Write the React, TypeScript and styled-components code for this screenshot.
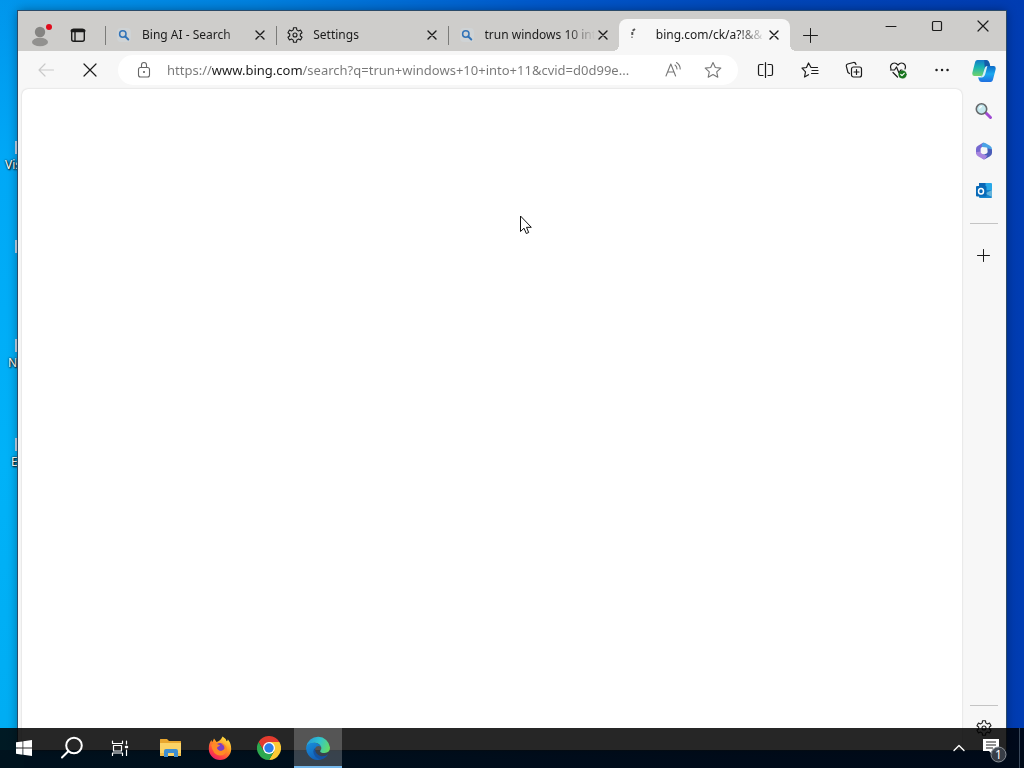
import React from "react";
import styled, { createGlobalStyle } from "styled-components";

const Global = createGlobalStyle`
  * { box-sizing: border-box; }
  body {
    margin: 0;
    overflow: hidden;
    font-family: "Noto Sans", "Open Sans", sans-serif;
    font-size: 12px;
    color: #1b1b1b;
  }
  button { font: inherit; color: inherit; }
`;

const Desktop = styled.div`
  position: relative;
  height: 100vh;
  overflow: hidden;
  background: linear-gradient(to right, #0096ec 0%, #0080de 25%, #0058cb 53%, #0046b8 75%, #003cb2 100%);

  &::before {
    content: "";
    position: absolute;
    inset: 0 auto 0 0;
    width: 24px;
    background: linear-gradient(rgba(0, 176, 248, 0) 0, #00a8f6 160px, #00b2f8 60%, #00acf2 100%);
  }
`;

const Shortcut = styled.div<{ $top: number; $left: number }>`
  position: absolute;
  top: ${(p) => p.$top}px;
  left: ${(p) => p.$left}px;
  color: #fff;
  line-height: 16px;
  white-space: nowrap;
  text-shadow: 1px 1px 2px #000, 0 0 2px #000;
`;

const ShortcutMark = styled.span<{ $top: number }>`
  position: absolute;
  left: 15px;
  top: ${(p) => p.$top}px;
  width: 12px;
  height: 13px;
  background: #c4d8ec;
`;

const BrowserWindow = styled.main`
  position: absolute;
  inset: 11px 18px 18px 18px;
  display: flex;
  flex-direction: column;
  background: #f7f7f7;
  box-shadow: 0 0 0 1px #2b4a68, 0 0 10px rgba(0, 0, 0, 0.4);
`;

const TabStrip = styled.header`
  display: flex;
  height: 40px;
  flex: none;
  background: #cecdcb;
`;

const IconButton = styled.button<{ $w?: number; $h?: number }>`
  display: flex;
  flex: none;
  align-items: center;
  justify-content: center;
  width: ${(p) => p.$w ?? 32}px;
  height: ${(p) => p.$h ?? 32}px;
  padding: 0;
  border: 0;
  background: transparent;
`;

const ProfileArea = styled.div`
  display: flex;
  flex: none;
  width: 87px;
  padding: 8px 0 0 4px;
  gap: 2px;
`;

const Tabs = styled.div`
  display: flex;
  flex: 0 1 685px;
  min-width: 0;
  padding-top: 8px;
`;

const Tab = styled.div<{ $active?: boolean }>`
  position: relative;
  display: flex;
  flex: 1 1 0;
  min-width: 0;
  align-items: center;
  padding: 0 8px 0 11px;
  background: ${(p) => (p.$active ? "#f7f7f7" : "transparent")};
  border-radius: ${(p) => (p.$active ? "8px 8px 0 0" : "0")};

  &::before {
    content: "";
    position: absolute;
    left: 0;
    top: 7px;
    width: 1px;
    height: 19px;
    background: ${(p) => (p.$active ? "transparent" : "#7b7b79")};
  }

  &::after {
    content: "";
    display: ${(p) => (p.$active ? "block" : "none")};
    position: absolute;
    inset: auto -6px 0 -6px;
    height: 6px;
    background:
      radial-gradient(circle at 0 0, transparent 6px, #f7f7f7 6px) left / 6px 6px no-repeat,
      radial-gradient(circle at 100% 0, transparent 6px, #f7f7f7 6px) right / 6px 6px no-repeat;
  }
`;

const TabLabel = styled.button`
  display: flex;
  flex: 1;
  min-width: 0;
  gap: 10px;
  align-items: center;
  height: 32px;
  padding: 0;
  border: 0;
  background: transparent;
  text-align: left;

  svg { flex: none; }
`;

const TabTitle = styled.span`
  flex: 1;
  overflow: hidden;
  white-space: nowrap;
  line-height: 16px;
  mask-image: linear-gradient(to right, #000 calc(100% - 28px), transparent);
`;

const NewTab = styled.div`
  padding-top: 8px;
  margin-left: 5px;
`;

const Caption = styled.div`
  display: flex;
  margin-left: auto;
`;

const Body = styled.div`
  display: flex;
  flex: 1;
  min-height: 0;
`;

const Main = styled.section`
  display: flex;
  flex: 1;
  min-width: 0;
  flex-direction: column;
`;

const Toolbar = styled.nav`
  display: flex;
  flex: none;
  align-items: center;
  height: 38px;
  padding: 0 0 0 6px;
`;

const ToolbarActions = styled.div`
  display: flex;
  flex: none;
  gap: 4px;
`;

const AddressBar = styled.form`
  display: flex;
  flex: 1;
  min-width: 0;
  align-items: center;
  height: 30px;
  margin: 0 8px 0 6px;
  padding: 0 5px 0 10px;
  background: #fff;
  border-radius: 15px;
`;

const AddressInput = styled.input`
  flex: 1;
  min-width: 0;
  height: 24px;
  margin: 0 5px 0 7px;
  padding: 0;
  border: 0;
  outline: 0;
  font-family: "Noto Sans", "Open Sans", sans-serif;
  font-size: 13px;
  text-overflow: ellipsis;
  background: linear-gradient(to right, #777 45px, #1b1b1b 45px, #1b1b1b 135px, #777 135px);
  background-clip: text;
  -webkit-background-clip: text;
  -webkit-text-fill-color: transparent;
`;

const Page = styled.div`
  flex: 1;
  margin-left: 4px;
  background: #fff;
  border-radius: 6px 6px 0 0;
  box-shadow: 0 0 2px rgba(0, 0, 0, 0.2);
`;

const Sidebar = styled.aside`
  display: flex;
  flex: none;
  flex-direction: column;
  align-items: center;
  width: 44px;
  padding-bottom: 7px;
`;

const Rule = styled.hr`
  width: 28px;
  height: 1px;
  margin: 12px 0 15px;
  border: 0;
  background: #c4c4c4;
`;

const Spacer = styled.div`
  flex: 1;
`;

const LowerRule = styled(Rule)`
  margin: 0 0 7px;
`;

const Taskbar = styled.footer`
  position: absolute;
  inset: auto 0 0 0;
  display: flex;
  height: 40px;
  background: linear-gradient(rgba(0, 0, 0, 0.85) 22px, rgba(0, 6, 12, 0.92) 22px);
`;

const Apps = styled.div`
  display: flex;
  gap: 1px;
  margin-left: 3px;
`;

const TaskButton = styled(IconButton)<{ $active?: boolean }>`
  width: 48px;
  height: 40px;
  background: ${(p) => (p.$active ? "rgba(255, 255, 255, 0.22)" : "transparent")};
  box-shadow: inset 0 -2px 0 ${(p) => (p.$active ? "#76b9ed" : "transparent")};
`;

const Tray = styled.div`
  display: flex;
  margin-left: auto;
  padding-right: 4px;
`;

const Notifications = styled(IconButton)`
  width: 45px;
  height: 40px;
  padding-top: 4px;
`;

const ShowDesktop = styled.div`
  width: 1px;
  margin-left: 3px;
  background: #39485a;
`;

const Pointer = styled.svg`
  position: absolute;
  left: 519px;
  top: 215px;
`;

type LineProps = { size?: number; color?: string; width?: number; children: React.ReactNode };

const Line = ({ size = 20, color = "#1b1b1b", width = 1, children }: LineProps) => (
  <svg width={size} height={size} viewBox={`0 0 ${size} ${size}`} fill="none" stroke={color}
    strokeWidth={width} strokeLinecap="round" strokeLinejoin="round" aria-hidden="true">
    {children}
  </svg>
);

const CloseGlyph = ({ size = 16, r = 4, width = 1.2 }: { size?: number; r?: number; width?: number }) => {
  const a = size / 2 - r;
  const b = size / 2 + r;
  return <Line size={size} width={width}><path d={`M${a} ${a}L${b} ${b}M${b} ${a}L${a} ${b}`} /></Line>;
};

const PlusGlyph = ({ r = 7 }: { r?: number }) => (
  <Line size={20}><path d={`M9.5 ${10.5 - r}V${10.5 + r}M${9.5 - r} 10.5H${9.5 + r}`} /></Line>
);

const SearchFavicon = () => (
  <svg width="16" height="16" viewBox="0 0 16 16" fill="none" stroke="#3173b8" aria-hidden="true">
    <rect x="1" y="1" width="14" height="14" rx="4" fill="#cfd3d5" stroke="none" />
    <circle cx="6.8" cy="7" r="3.2" strokeWidth="1.5" />
    <path d="M9.3 9.500L12.300 12.500" strokeWidth="1.900" strokeLinecap="round" />
  </svg>
);

const gearPath = (() => {
  const points: string[] = [];
  for (let i = 0; i < 6; i++) {
    const base = -90 + i * 60;
    [[-19, 5.4], [-12, 7.4], [12, 7.4], [19, 5.4]].forEach(([offset, radius]) => {
      const angle = ((base + offset) * Math.PI) / 180;
      points.push(`${(8 + Math.cos(angle) * radius).toFixed(2)} ${(8 + Math.sin(angle) * radius).toFixed(2)}`);
    });
  }
  return `M${points.join("L")}Z`;
})();

const Gear = () => (
  <svg width="16" height="16" viewBox="0 0 16 16" fill="none" stroke="#1b1b1b" strokeWidth="1.1"
    strokeLinejoin="round" overflow="visible" aria-hidden="true">
    <path d={gearPath} />
    <circle cx="8" cy="8" r="2" />
  </svg>
);

const Spinner = () => (
  <svg width="16" height="16" viewBox="0 0 16 16" fill="none" stroke="#555" strokeWidth="2" aria-hidden="true">
    <path d="M5 2L2.600 3.800M2.300 5V8" />
    <path d="M2 9.500V11" stroke="#999" />
  </svg>
);

const Profile = () => (
  <svg width="24" height="26" viewBox="0 0 24 26" fill="#92918f" aria-hidden="true">
    <circle cx="12" cy="10" r="5.2" fill="#858482" />
    <ellipse cx="12" cy="20" rx="8" ry="4.3" />
    <circle cx="21" cy="5" r="3" fill="#e00b1c" />
  </svg>
);

const Copilot = () => (
  <svg width="24" height="24" viewBox="0 0 24 24" aria-hidden="true">
    <defs>
      <linearGradient id="cpA" x1="0" y1="0" x2="0" y2="1">
        <stop stopColor="#1478c9" /><stop offset=".45" stopColor="#18b4b3" /><stop offset="1" stopColor="#72d36b" />
      </linearGradient>
      <linearGradient id="cpB" x1="0" y1="0" x2="0" y2="1">
        <stop stopColor="#0d6bc8" /><stop offset=".5" stopColor="#1ba9ef" /><stop offset="1" stopColor="#1f6fe0" />
      </linearGradient>
    </defs>
    <path d="M5.5 1H14.2Q16.5 1 17.2 3.5L18 6H15.6Q14 6 13.4 8L11 15.5Q10.4 17 8.6 17H2.4Q-.2 17 .4 13.5L2.8 4.2Q3.5 1 5.5 1Z" fill="url(#cpA)" />
    <path d="M18.5 23H9.8Q7.5 23 6.8 20.5L6 18H8.4Q10 18 10.6 16L13 8.5Q13.6 7 15.4 7H21.6Q24.2 7 23.6 10.5L21.2 19.8Q20.5 23 18.5 23Z" fill="url(#cpB)" />
    <path d="M12.2 1H14.2Q16.5 1 17.2 3.5L18.2 7H15.4Q13.8 7 13.3 8.5L12.8 10Z" fill="#155ba9" />
    <path d="M6 18L8.4 18Q10 18 10.6 16L13 8.5Q13.6 7 15.4 7L13.4 14.5Q12.4 18.5 9.5 18.5H6.2Z" fill="#d8f4f1" />
  </svg>
);

const Magnifier = () => (
  <svg width="18" height="18" viewBox="0 0 18 18" fill="none" aria-hidden="true">
    <path d="M11 11L15.5 15.5" stroke="#a04ad2" strokeWidth="3" strokeLinecap="round" />
    <circle cx="6.5" cy="7" r="5.2" fill="#c5e8ee" stroke="#66696c" strokeWidth="1.6" />
    <path d="M4.500 6.500Q5 4.500 7 4.400" stroke="#fff" strokeWidth="1.2" />
  </svg>
);

const Microsoft365 = () => (
  <svg width="18" height="18" viewBox="0 0 18 18" aria-hidden="true">
    <path d="M8 .8L3 3.7Q1 4.8 1 7V12L5.6 9.8V7Q5.7 5.8 6.7 5.3L10.5 3Q9.5.2 8 .8Z" fill="#7568cf" />
    <path d="M8 .8Q9 .4 10.2 1L15 3.8Q17 5 17 7.2V11L12.6 8.3V7Q12.5 6 11.6 5.4L7.2 5Q6 2.8 8 .8Z" fill="#4aa3e6" />
    <path d="M17 7.4V11Q17 13 15 14.2L10.2 16.9Q9 17.4 7.8 17L6.8 12.6H9.2L11.6 11.4Q12.6 10.8 12.6 9.8V6.2Z" fill="#4a5cb8" />
    <path d="M1 10.2Q1 13 3 14.2L7.8 17Q9 17.4 10.2 16.9L12.4 13.5 9.4 13 6.6 11.4Q5.6 10.8 5.6 9.4Z" fill="#a885df" />
  </svg>
);

const Outlook = () => (
  <svg width="18" height="18" viewBox="0 0 18 18" aria-hidden="true">
    <rect x="4" y="1" width="13" height="10" rx="1" fill="#28a8e8" />
    <path d="M4 1H10.500V6H4Z" fill="#0a65b5" />
    <path d="M4 8H17V15Q17 16 16 16H5Q4 16 4 15Z" fill="#1686cf" />
    <path d="M17 8V15L10 11.500Z" fill="#63b4dc" />
    <rect x="1" y="4" width="10.500" height="10.500" rx="1" fill="#086ab8" />
    <ellipse cx="6" cy="9.200" rx="2.500" ry="2.800" fill="none" stroke="#fff" strokeWidth="1.500" />
  </svg>
);

const Explorer = () => (
  <svg width="24" height="24" viewBox="0 0 24 24" aria-hidden="true">
    <path d="M1 3.5Q1 3 1.5 3H8L10 5H21.5Q22 5 22 5.5V20H1Z" fill="#e9a72f" />
    <path d="M1 7H22V20H1Z" fill="#fcd366" />
    <path d="M5 21V15Q5 13 7 13H17Q19 13 19 15V21H15V17H9V21Z" fill="#3f8ed0" />
    <path d="M1 17H5V20H1ZM19 17H22V20H19Z" fill="#f1bd4a" />
  </svg>
);

const Firefox = () => (
  <svg width="24" height="24" viewBox="0 0 24 24" aria-hidden="true">
    <defs>
      <linearGradient id="ff" x1=".85" y1="0" x2=".2" y2="1">
        <stop stopColor="#fff04a" /><stop offset=".4" stopColor="#ff9a22" /><stop offset=".75" stopColor="#ff4143" /><stop offset="1" stopColor="#e8196e" />
      </linearGradient>
    </defs>
    <path d="M14.6.5Q18 2.5 18.6 5.3Q20 4.6 19.8 3.2Q23.4 7.7 23.2 13A11.2 11 0 0 1 .8 13Q.7 7 3.6 4L4 6.2Q5.2 4.8 6 2.5L8.6 6Q12.3 5 14.6.5Z" fill="url(#ff)" />
    <circle cx="12" cy="12.7" r="5.7" fill="#7d3fc5" />
    <path d="M3.2 9Q7 5.8 9.2 7.7L12.5 8.8Q11 10.8 9.3 11Q8.8 13.8 12 14.6Q15 15 16.5 12.6Q15.5 9 12.8 7.5Q18.7 8 19 13.5Q17.8 19.5 12 19.5Q4.8 19 3.2 9Z" fill="#ff8a26" />
    <path d="M9 8.500Q13 6.500 16 10Q17 13 14 14.500Q10 15 9.300 12Q11.500 11.300 12.500 9Z" fill="#7d3fc5" />
  </svg>
);

const Chrome = () => (
  <svg width="24" height="24" viewBox="0 0 24 24" aria-hidden="true">
    <path d="M1.6 6A12 12 0 0 1 22.4 6H12L6.8 15Z" fill="#e33b2e" />
    <path d="M22.4 6A12 12 0 0 1 12 24L17.2 15 12 6Z" fill="#fcc934" />
    <path d="M12 24A12 12 0 0 1 1.6 6L6.8 15H17.2Z" fill="#2da94f" />
    <circle cx="12" cy="12" r="6" fill="#fff" />
    <circle cx="12" cy="12" r="4.7" fill="#2d7de9" />
  </svg>
);

const Edge = () => (
  <svg width="24" height="24" viewBox="0 0 24 24" aria-hidden="true">
    <defs>
      <linearGradient id="edTop" x1="0" y1=".3" x2="1" y2=".6">
        <stop stopColor="#2699d9" /><stop offset=".5" stopColor="#30c4cf" /><stop offset="1" stopColor="#65dc64" />
      </linearGradient>
      <linearGradient id="edLow" x1="0" y1="0" x2=".5" y2="1">
        <stop stopColor="#1890dc" /><stop offset="1" stopColor="#1260b8" />
      </linearGradient>
    </defs>
    <path d="M.2 11A12 12 0 0 1 24 11.5Q24 16.8 18.5 17Q14 17 14.2 15Q16 13.3 15.2 11Q12.5 6 7 7Q2.5 7.7.2 11Z" fill="url(#edTop)" />
    <path d="M0 12Q1.2 6.8 7.8 6.8Q13 7 15.2 11Q10.5 8.3 8.8 13Q8 20.5 15.3 23.5Q7 25.5 2.4 19Q.2 15.8 0 12Z" fill="url(#edLow)" />
    <path d="M9.2 12Q8.5 18.6 15 20.2Q19.5 20.8 22.2 18Q20 22.2 15.4 23.5Q7.7 22 7.3 15.5Q7.4 13.2 9.2 12Z" fill="#1552a0" />
  </svg>
);

const tabs = [
  { title: "Bing AI - Search", icon: <SearchFavicon /> },
  { title: "Settings", icon: <Gear /> },
  { title: "trun windows 10 int", icon: <SearchFavicon /> },
  { title: "bing.com/ck/a?!&&", icon: <Spinner />, active: true },
];

const shortcuts = [
  { label: "Vis", top: 157, left: 5, mark: 141 },
  { label: "", top: 256, left: 5, mark: 240 },
  { label: "N", top: 355, left: 8, mark: 339 },
  { label: "E", top: 454, left: 11, mark: 438 },
];

export default function App() {
  return (
    <>
      <Global />
      <Desktop>
        {shortcuts.map((s) => (
          <React.Fragment key={s.top}>
            <ShortcutMark $top={s.mark} />
            <Shortcut $top={s.top} $left={s.left}>{s.label}</Shortcut>
          </React.Fragment>
        ))}
        <BrowserWindow>
          <TabStrip>
            <ProfileArea>
              <IconButton $w={36} aria-label="Profile"><Profile /></IconButton>
              <IconButton $w={36} aria-label="Tab actions">
                <Line width={1.4}>
                  <rect x="3.7" y="4.2" width="12.6" height="12" rx="2" />
                  <path d="M4 5.8H16" strokeWidth="3" />
                  <path d="M7 7V16" />
                </Line>
              </IconButton>
            </ProfileArea>
            <Tabs role="tablist">
              {tabs.map((t) => (
                <Tab key={t.title} $active={t.active}>
                  <TabLabel role="tab" aria-selected={!!t.active}>
                    {t.icon}
                    <TabTitle>{t.title}</TabTitle>
                  </TabLabel>
                  <IconButton $w={16} $h={16} aria-label="Close tab"><CloseGlyph width={1.4} /></IconButton>
                </Tab>
              ))}
            </Tabs>
            <NewTab><IconButton aria-label="New tab"><PlusGlyph /></IconButton></NewTab>
            <Caption>
              <IconButton $w={46} $h={30} aria-label="Minimize"><Line><path d="M5 10.5H15" /></Line></IconButton>
              <IconButton $w={46} $h={30} aria-label="Maximize"><Line width={1.2}><rect x="5.5" y="5.5" width="9" height="9" rx="1" /></Line></IconButton>
              <IconButton $w={46} $h={30} aria-label="Close"><CloseGlyph size={20} r={5} /></IconButton>
            </Caption>
          </TabStrip>
          <Body>
            <Main>
              <Toolbar>
                <IconButton $w={44} aria-label="Back"><Line color="#c9c9c9" width={1.2}><path d="M17.500 10H3M9 4L3 10L9 16" /></Line></IconButton>
                <IconButton $w={44} aria-label="Stop"><CloseGlyph size={20} r={6} /></IconButton>
                <AddressBar>
                  <IconButton type="button" aria-label="Site information">
                    <Line color="#666" width={1.1}>
                      <rect x="4.500" y="7.500" width="11" height="9.500" rx="2" />
                      <path d="M7.500 7V5A2.500 2.500 0 0 1 12.500 5V7" />
                      <circle cx="10" cy="12" r=".5" fill="#666" />
                    </Line>
                  </IconButton>
                  <AddressInput aria-label="Address" readOnly value="https://www.bing.com/search?q=trun+windows+10+into+11&cvid=d0d99e..." />
                  <IconButton $w={40} type="button" aria-label="Read aloud">
                    <Line color="#777" width={1.1}>
                      <path d="M3 16L7.800 4L12.600 16M4.800 12H10.800M12 5Q14 6.500 14 9M13.500 2.500Q17.200 5 17.200 9" />
                    </Line>
                  </IconButton>
                  <IconButton $w={40} $h={30} type="button" aria-label="Add to favorites">
                    <Line color="#777" width={1.1}>
                      <path d="M10 2.500L12.300 7.500L17.800 8.100L13.700 11.800L14.800 17.200L10 14.500L5.200 17.200L6.300 11.800L2.200 8.100L7.700 7.500Z" />
                    </Line>
                  </IconButton>
                </AddressBar>
                <ToolbarActions>
                  <IconButton $w={40} aria-label="Split screen">
                    <Line width={1.2}><path d="M7 4.500H4Q2.500 4.500 2.500 6V14Q2.500 15.500 4 15.500H7M12 4.500H15Q16.500 4.500 16.500 6V14Q16.500 15.500 15 15.500H12M9.500 2.500V17.500" /></Line>
                  </IconButton>
                  <IconButton $w={40} aria-label="Favorites">
                    <Line width={1.2}><path d="M17.500 7.500H11L8.500 3L6.500 7.500L2 8.200L5.500 11.800L4.500 17L8.500 14.700M12 10.500H18M11.500 13.500H18" /></Line>
                  </IconButton>
                  <IconButton $w={40} aria-label="Collections">
                    <Line width={1.2}>
                      <rect x="7.500" y="7" width="10" height="10" rx="2" />
                      <path d="M12.500 9.500V14.500M10 12H15M5.500 13.500L4 12.500L2.300 6.200Q2 4.500 3.700 4L9.500 2.500Q11.300 2.200 12 4.500" />
                    </Line>
                  </IconButton>
                  <IconButton $w={40} aria-label="Browser essentials">
                    <Line width={1.2}>
                      <path d="M3 9Q1.500 5.500 4.500 3.500Q7.500 2 10 5Q12.500 2 15.500 3.500Q18.500 5.500 17 9M2.500 10H6.500L8.500 7L11 13L12.700 10H14M5 12.500L9.500 17" />
                      <circle cx="14.500" cy="14.500" r="3.800" fill="#18751e" stroke="#18751e" strokeWidth=".5" />
                      <path d="M12.800 14.500L14 15.700L16.200 13.300" stroke="#fff" />
                    </Line>
                  </IconButton>
                  <IconButton $w={40} aria-label="Settings and more">
                    <Line><path d="M4.500 10H4.600M10 10H10.100M15.500 10H15.600" strokeWidth="2.400" /></Line>
                  </IconButton>
                </ToolbarActions>
              </Toolbar>
              <Page />
            </Main>
            <Sidebar>
              <IconButton $h={39} aria-label="Copilot"><Copilot /></IconButton>
              <IconButton $h={41} aria-label="Search"><Magnifier /></IconButton>
              <IconButton $h={40} aria-label="Microsoft 365"><Microsoft365 /></IconButton>
              <IconButton $h={40} aria-label="Outlook"><Outlook /></IconButton>
              <Rule />
              <IconButton aria-label="Customize sidebar"><PlusGlyph r={6} /></IconButton>
              <Spacer />
              <LowerRule />
              <IconButton $h={30} aria-label="Settings"><Gear /></IconButton>
            </Sidebar>
          </Body>
        </BrowserWindow>
        <Pointer width="14" height="22" viewBox="0 0 14 22" aria-hidden="true">
          <path d="M1.500 1V16.500L5 13.200L7.300 18.500L9.700 17.500L7.500 12.300H12.300Z" fill="#fff" stroke="#111" />
        </Pointer>
        <Taskbar>
          <TaskButton aria-label="Start">
            <svg width="16" height="16" viewBox="0 0 16 16" fill="#fff"><path d="M0 2.300L6.500 1.400V7.600H0ZM7.300 1.300L16 0V7.600H7.300ZM0 8.400H6.500V14.700L0 13.800ZM7.300 8.400H16V16L7.300 14.800Z" /></svg>
          </TaskButton>
          <TaskButton aria-label="Search">
            <Line size={24} color="#fff" width={2}><circle cx="14" cy="9.500" r="7.800" /><path d="M8.300 15.200L2 21.500" /></Line>
          </TaskButton>
          <TaskButton aria-label="Task view">
            <Line size={18} color="#fff" width={1.2}>
              <path d="M1.500 2V4.500H11.500V2M1.500 16.500V14H11.500V16.500M15.500 2V5M15.500 11V16.500" />
              <rect x="2.500" y="6.500" width="8" height="5.500" />
              <path d="M15 8H16" strokeWidth="2.500" />
            </Line>
          </TaskButton>
          <Apps>
            <TaskButton aria-label="File Explorer"><Explorer /></TaskButton>
            <TaskButton aria-label="Firefox"><Firefox /></TaskButton>
            <TaskButton aria-label="Chrome"><Chrome /></TaskButton>
            <TaskButton $active aria-label="Edge"><Edge /></TaskButton>
          </Apps>
          <Tray>
            <IconButton $w={24} $h={40} aria-label="Show hidden icons">
              <Line size={16} color="#fff" width={1.4}><path d="M3 10.500L8 5.500L13 10.500" /></Line>
            </IconButton>
            <Notifications aria-label="Notifications">
              <svg width="26" height="26" viewBox="0 0 26 26">
                <path d="M2 2H18V14H12V18L8 14H2Z" fill="#fff" />
                <path d="M5 5H15M5 8H15M5 11H12" stroke="#222" strokeWidth="1.200" />
                <circle cx="17.500" cy="17.500" r="7.500" fill="#3b424a" fillOpacity=".93" stroke="#8b9198" />
                <text x="17.500" y="22" fill="#fff" fontSize="12" textAnchor="middle">1</text>
              </svg>
            </Notifications>
            <ShowDesktop />
          </Tray>
        </Taskbar>
      </Desktop>
    </>
  );
}
